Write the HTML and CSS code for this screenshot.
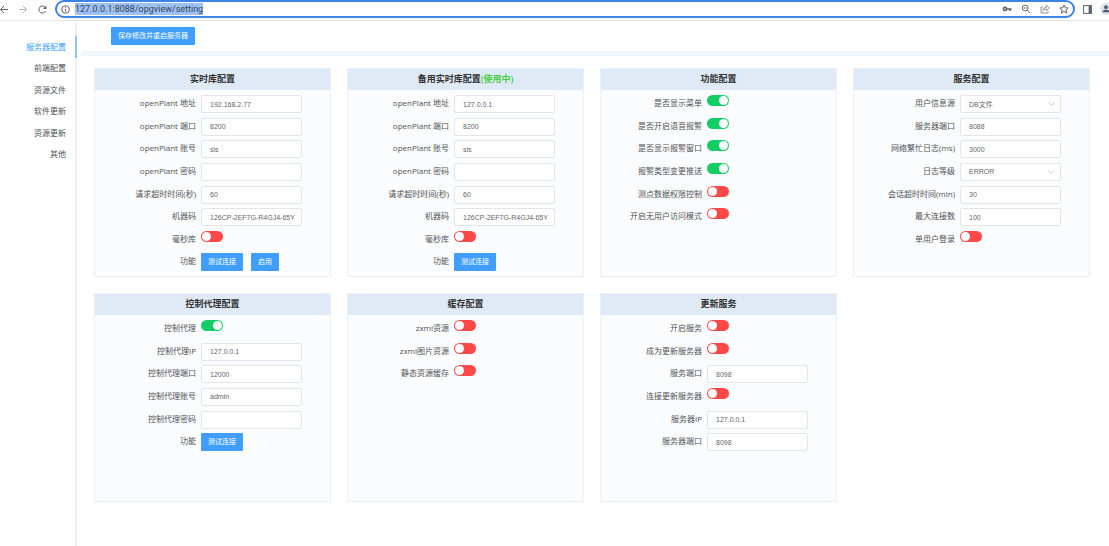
FILE: index.html
```html
<!DOCTYPE html>
<html>
<head>
<meta charset="utf-8">
<title>opgview</title>
<link rel="stylesheet" href="styles.css">
</head>
<body>
<header class="browser">
  <button class="tool" aria-label="Back"><svg width="8" height="9" viewBox="0 0 8 9"><path d="M8 4.5H0.5M4 1L0.5 4.5L4 8"/></svg></button>
  <button class="tool tool-dim" aria-label="Forward"><svg width="8" height="9" viewBox="0 0 8 9"><path d="M0 4.5H7.5M4 1L7.5 4.5L4 8"/></svg></button>
  <button class="tool" aria-label="Reload"><svg width="9" height="9" viewBox="0 0 9 9"><path d="M7.6 6A3.5 3.5 0 1 1 7 2.1"/><path class="solid" d="M8.4 0.4V3.9H4.9Z"/></svg></button>
  <div class="address">
    <svg width="9" height="9" viewBox="0 0 9 9"><circle cx="4.5" cy="4.5" r="3.8"/><path d="M4.5 4.1V6.7M4.5 2.2V3.2"/></svg>
    <input class="url" type="text" aria-label="URL" value="127.0.0.1:8088/opgview/setting">
    <div class="address-tools">
      <button class="tool" aria-label="Passwords"><svg width="10" height="10" viewBox="0 0 10 10"><circle cx="3" cy="5" r="1.6" stroke-width="1.6"/><path stroke-width="1.6" d="M4.5 5H9.5M8 5V7"/></svg></button>
      <button class="tool" aria-label="Zoom"><svg width="10" height="10" viewBox="0 0 10 10"><circle cx="4.2" cy="4" r="2.9"/><path d="M6.3 6.2L9.2 9.2M2.8 4H5.6"/></svg></button>
      <button class="tool tool-soft" aria-label="Share"><svg width="10" height="10" viewBox="0 0 10 10"><path d="M3 3H1V9H8V7M3 6.5C3.2 4.3 4.5 3.3 6.3 3.2V1.2L9.4 4L6.3 6.6V4.8C5 4.8 4 5.2 3 6.5Z"/></svg></button>
      <button class="tool" aria-label="Bookmark"><svg width="10" height="10" viewBox="0 0 10 10"><path d="M5 1L6.2 3.7L9.2 4L7 6L7.6 9L5 7.4L2.4 9L3 6L0.8 4L3.8 3.7Z"/></svg></button>
    </div>
  </div>
  <button class="tool" aria-label="Side panel"><svg width="9" height="9" viewBox="0 0 9 9"><rect x="0.6" y="0.6" width="7.8" height="7.8"/><path class="solid" d="M5.6 0.6H8.4V8.4H5.6Z"/></svg></button>
  <button class="tool avatar" aria-label="Profile"><svg width="12" height="12" viewBox="0 0 12 12"><circle class="disc" cx="6" cy="6" r="6"/><circle class="person" cx="6" cy="4.2" r="1.9"/><path class="person" d="M2.6 9.2C2.6 7.4 4.3 6.8 6 6.8S9.4 7.4 9.4 9.2Z"/></svg></button>
</header>
<div class="page">
  <nav class="side">
    <ul class="menu">
      <li><a class="menu-item active" href="#server">服务器配置</a></li>
      <li><a class="menu-item" href="#front">前端配置</a></li>
      <li><a class="menu-item" href="#files">资源文件</a></li>
      <li><a class="menu-item" href="#software">软件更新</a></li>
      <li><a class="menu-item" href="#resource">资源更新</a></li>
      <li><a class="menu-item" href="#other">其他</a></li>
    </ul>
  </nav>
  <main class="main">
    <div class="toolbar"><button class="btn">保存修改并重启服务器</button></div>
    <div class="cards">
      <section class="card">
        <h2 class="card-title">实时库配置</h2>
        <div class="rows">
          <div class="row"><label for="a1">openPlant 地址</label><input class="field" id="a1" value="192.168.2.77"></div>
          <div class="row"><label for="a2">openPlant 端口</label><input class="field" id="a2" value="8200"></div>
          <div class="row"><label for="a3">openPlant 账号</label><input class="field" id="a3" value="sis"></div>
          <div class="row"><label for="a4">openPlant 密码</label><input class="field" id="a4" type="password"></div>
          <div class="row"><label for="a5">请求超时时间(秒)</label><input class="field" id="a5" value="60"></div>
          <div class="row"><label for="a6">机器码</label><input class="field" id="a6" value="126CP-2EF7G-R4GJ4-65Y"></div>
          <div class="row"><label for="a7">毫秒库</label><input class="switch" id="a7" type="checkbox"></div>
          <div class="row"><span>功能</span><div class="actions"><button class="btn">测试连接</button><button class="btn">启用</button></div></div>
        </div>
      </section>
      <section class="card">
        <h2 class="card-title">备用实时库配置<span class="in-use">(使用中)</span></h2>
        <div class="rows">
          <div class="row"><label for="b1">openPlant 地址</label><input class="field" id="b1" value="127.0.0.1"></div>
          <div class="row"><label for="b2">openPlant 端口</label><input class="field" id="b2" value="8200"></div>
          <div class="row"><label for="b3">openPlant 账号</label><input class="field" id="b3" value="sis"></div>
          <div class="row"><label for="b4">openPlant 密码</label><input class="field" id="b4" type="password"></div>
          <div class="row"><label for="b5">请求超时时间(秒)</label><input class="field" id="b5" value="60"></div>
          <div class="row"><label for="b6">机器码</label><input class="field" id="b6" value="126CP-2EF7G-R4GJ4-65Y"></div>
          <div class="row"><label for="b7">毫秒库</label><input class="switch" id="b7" type="checkbox"></div>
          <div class="row"><span>功能</span><div class="actions"><button class="btn">测试连接</button></div></div>
        </div>
      </section>
      <section class="card">
        <h2 class="card-title">功能配置</h2>
        <div class="rows">
          <div class="row"><label for="c1">是否显示菜单</label><input class="switch" id="c1" type="checkbox" checked></div>
          <div class="row"><label for="c2">是否开启语音报警</label><input class="switch" id="c2" type="checkbox" checked></div>
          <div class="row"><label for="c3">是否显示报警窗口</label><input class="switch" id="c3" type="checkbox" checked></div>
          <div class="row"><label for="c4">报警类型变更推送</label><input class="switch" id="c4" type="checkbox" checked></div>
          <div class="row"><label for="c5">测点数据权限控制</label><input class="switch" id="c5" type="checkbox"></div>
          <div class="row"><label for="c6">开启无用户访问模式</label><input class="switch" id="c6" type="checkbox"></div>
        </div>
      </section>
      <section class="card">
        <h2 class="card-title">服务配置</h2>
        <div class="rows">
          <div class="row"><label for="d1">用户信息源</label><div class="select-wrap"><select class="field" id="d1"><option>DB文件</option></select><svg width="7" height="4" viewBox="0 0 7 4"><path d="M0.5 0.5L3.5 3.2L6.5 0.5"/></svg></div></div>
          <div class="row"><label for="d2">服务器端口</label><input class="field" id="d2" value="8088"></div>
          <div class="row"><label for="d3">网络繁忙日志(ms)</label><input class="field" id="d3" value="3000"></div>
          <div class="row"><label for="d4">日志等级</label><div class="select-wrap"><select class="field" id="d4"><option>ERROR</option></select><svg width="7" height="4" viewBox="0 0 7 4"><path d="M0.5 0.5L3.5 3.2L6.5 0.5"/></svg></div></div>
          <div class="row"><label for="d5">会话超时时间(min)</label><input class="field" id="d5" value="30"></div>
          <div class="row"><label for="d6">最大连接数</label><input class="field" id="d6" value="100"></div>
          <div class="row"><label for="d7">单用户登录</label><input class="switch" id="d7" type="checkbox"></div>
        </div>
      </section>
      <section class="card">
        <h2 class="card-title">控制代理配置</h2>
        <div class="rows">
          <div class="row"><label for="e1">控制代理</label><input class="switch" id="e1" type="checkbox" checked></div>
          <div class="row"><label for="e2">控制代理IP</label><input class="field" id="e2" value="127.0.0.1"></div>
          <div class="row"><label for="e3">控制代理端口</label><input class="field" id="e3" value="12000"></div>
          <div class="row"><label for="e4">控制代理账号</label><input class="field" id="e4" value="admin"></div>
          <div class="row"><label for="e5">控制代理密码</label><input class="field" id="e5" type="password"></div>
          <div class="row"><span>功能</span><div class="actions"><button class="btn">测试连接</button></div></div>
        </div>
      </section>
      <section class="card">
        <h2 class="card-title">缓存配置</h2>
        <div class="rows">
          <div class="row"><label for="f1">zxml资源</label><input class="switch" id="f1" type="checkbox"></div>
          <div class="row"><label for="f2">zxml图片资源</label><input class="switch" id="f2" type="checkbox"></div>
          <div class="row"><label for="f3">静态资源缓存</label><input class="switch" id="f3" type="checkbox"></div>
        </div>
      </section>
      <section class="card">
        <h2 class="card-title">更新服务</h2>
        <div class="rows">
          <div class="row"><label for="g1">开启服务</label><input class="switch" id="g1" type="checkbox"></div>
          <div class="row"><label for="g2">成为更新服务器</label><input class="switch" id="g2" type="checkbox"></div>
          <div class="row"><label for="g3">服务端口</label><input class="field" id="g3" value="8098"></div>
          <div class="row"><label for="g4">连接更新服务器</label><input class="switch" id="g4" type="checkbox"></div>
          <div class="row"><label for="g5">服务器IP</label><input class="field" id="g5" value="127.0.0.1"></div>
          <div class="row"><label for="g6">服务器端口</label><input class="field" id="g6" value="8098"></div>
        </div>
      </section>
    </div>
  </main>
</div>
</body>
</html>
```

FILE: styles.css
```css
* {
  box-sizing: border-box;
}

body {
  margin: 0;
  min-height: 100vh;
  display: flex;
  flex-direction: column;
  background: #fff;
  color: #505358;
  font: 8px/12px "Open Sans", "Noto Sans CJK SC", sans-serif;
}

button,
input,
select {
  margin: 0;
  font: inherit;
}

/* Browser bar */
.browser {
  display: flex;
  align-items: center;
  height: 21px;
  padding-bottom: 2px;
  border-bottom: 1px solid #e4e6e9;
  overflow: hidden;
}

.browser svg {
  display: block;
  flex: none;
  fill: none;
  stroke: #5f6368;
  stroke-width: 1;
}

.browser .solid {
  fill: #5f6368;
  stroke: none;
}

.tool {
  flex: none;
  padding: 0;
  border: 0;
  background: none;
}

.browser > .tool {
  margin-right: 11px;
}

.browser > .tool-dim svg {
  stroke: #b4b7bb;
}

.tool-soft svg {
  stroke: #909399;
}

.address {
  flex: 1;
  display: flex;
  align-items: center;
  gap: 5px;
  height: 18px;
  padding: 0 4px;
  border: 2px solid #3b82ea;
  border-radius: 9px;
  margin-right: 8px;
  margin-left: -3px;
}

.url {
  field-sizing: content;
  height: 12px;
  padding: 0;
  border: 0;
  background: #9dc1f3;
  color: #35445c;
  font: 9px Roboto, sans-serif;
}

.address-tools {
  display: flex;
  gap: 9px;
  margin-left: auto;
}

.browser > .avatar {
  margin-left: -3px;
  margin-right: -3px;
}

.browser .disc {
  fill: #dfe3ea;
  stroke: none;
}

.browser .person {
  fill: #4b5b78;
  stroke: none;
}

/* Page frame */
.page {
  flex: 1;
  display: flex;
}

.side {
  width: 77px;
  flex: none;
  padding-top: 15px;
  box-shadow: inset -2px 0 #eceff4;
}

.menu {
  display: grid;
  grid-auto-rows: 1fr;
  height: 129px;
  margin: 0;
  padding: 0;
  list-style: none;
}

.menu-item {
  display: flex;
  align-items: center;
  justify-content: flex-end;
  height: 100%;
  padding-right: 9px;
  border-right: 2px solid transparent;
  color: #505358;
  text-decoration: none;
}

.menu-item.active {
  color: #409eff;
  border-right-color: #8cc4ff;
}

.main {
  flex: 1;
  min-width: 0;
  padding-left: 4px;
}

.toolbar {
  display: flex;
  padding: 6px 30px;
  border-bottom: 5px solid #f0f7fe;
}

.btn {
  height: 18px;
  padding: 0 7px;
  border: 0;
  border-radius: 1px;
  background: #409eff;
  color: #fff;
  font-size: 7px;
  line-height: 18px;
}

/* Cards */
.cards {
  display: grid;
  grid-template-columns: repeat(4, 1fr);
  gap: 16px;
  padding: 12px 19px 16px 13px;
}

.card {
  display: flex;
  flex-direction: column;
  border: 1px solid #eaf1f8;
  background: #fbfcfe;
}

.card-title {
  margin: 0;
  height: 21px;
  background: #e0eaf6;
  color: #303133;
  font-size: 9px;
  font-weight: 600;
  line-height: 20px;
  text-align: center;
}

.in-use {
  color: #43cf43;
}

.rows {
  flex: 1;
  display: grid;
  grid-template-rows: repeat(8, 1fr);
  min-height: 186px;
  padding: 3px 0 2px;
}

.row {
  display: grid;
  grid-template-columns: 43% 43%;
  column-gap: 5px;
  align-items: start;
  padding-top: 2px;
}

.row > label,
.row > span {
  line-height: 16px;
  text-align: right;
  white-space: nowrap;
}

.field {
  display: block;
  width: 100%;
  height: 18px;
  padding: 0 6px 0 8px;
  border: 1px solid #e2e5eb;
  border-radius: 2px;
  background: #fff;
  color: #63666c;
  font: 7px "Liberation Sans", "Noto Sans CJK SC", sans-serif;
}

.select-wrap {
  display: grid;
  align-items: center;
}

.select-wrap > * {
  grid-area: 1 / 1;
}

.select-wrap .field {
  appearance: none;
}

.select-wrap svg {
  z-index: 1;
  justify-self: end;
  margin-right: 6px;
  fill: none;
  stroke: #c0c4cc;
  pointer-events: none;
}

.switch {
  appearance: none;
  display: flex;
  align-items: center;
  width: 22px;
  height: 11px;
  padding: 1px;
  border-radius: 6px;
  background: #ff4949;
}

.switch::before {
  content: "";
  width: 9px;
  height: 9px;
  border-radius: 50%;
  background: #fff;
}

.switch:checked {
  justify-content: flex-end;
  background: #13ce66;
}

.actions {
  display: flex;
  gap: 8px;
}
```
